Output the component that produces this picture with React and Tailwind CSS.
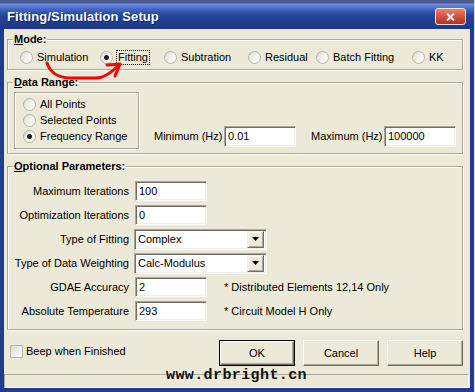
import React from 'react';

const Radio = ({ checked }) => (
  <span className="w-[13px] h-[13px] shrink-0 rounded-full border border-[#B5B5AA] bg-linear-to-br from-[#D6D6CE] via-[#F4F4F0] to-white flex items-center justify-center">
    {checked && <span className="w-[5px] h-[5px] rounded-full bg-[#1E1E1E]" />}
  </span>
);

const TextBox = ({ value, className }) => (
  <div
    className={
      'h-[20px] bg-white border border-t-[#ACA899] border-l-[#ACA899] border-r-white border-b-white shadow-[inset_1px_1px_0_#716F64,inset_-1px_-1px_0_#F1EFE2] pl-[3px] flex items-center ' +
      className
    }
  >
    {value}
  </div>
);

const Combo = ({ value }) => (
  <div className="ml-[5px] w-[133px] h-[21px] bg-white border border-t-[#ACA899] border-l-[#ACA899] border-r-white border-b-white shadow-[inset_1px_1px_0_#716F64,inset_-1px_-1px_0_#F1EFE2] flex items-center pl-[3px] pr-[2px]">
    <span className="flex-1">{value}</span>
    <span className="w-[17px] h-[17px] bg-[#ECE9D8] border border-t-[#F1EFE2] border-l-[#F1EFE2] border-r-[#716F64] border-b-[#716F64] shadow-[inset_1px_1px_0_#fff,inset_-1px_-1px_0_#ACA899] flex items-center justify-center">
      <svg width="7" height="4" viewBox="0 0 7 4">
        <path d="M0 0h7L3.5 4z" fill="#000" />
      </svg>
    </span>
  </div>
);

const Group = ({ title, underline, className, children }) => (
  <fieldset
    className={
      'w-[456px] border border-[#ACA899] shadow-[inset_1px_1px_0_#fff,1px_1px_0_#fff] ' + className
    }
  >
    <legend className="ml-[5px] px-[1px] font-bold leading-[13px]">
      <u>{underline}</u>
      {title}
    </legend>
    {children}
  </fieldset>
);

const Button = ({ label, isDefault }) => (
  <div
    className={
      isDefault
        ? 'w-[76px] h-[26px] border border-black flex'
        : 'w-[76px] h-[26px] flex'
    }
  >
    <div className="flex-1 bg-[#ECE9D8] border border-t-white border-l-white border-r-[#716F64] border-b-[#716F64] shadow-[inset_-1px_-1px_0_#ACA899] flex items-center justify-center">
      {label}
    </div>
  </div>
);

export default function App() {
  const modes = [
    { label: 'Simulation', w: 'w-[80px]' },
    { label: 'Fitting', w: 'w-[64px]', checked: true, focus: true },
    { label: 'Subtration', w: 'w-[84px]' },
    { label: 'Residual', w: 'w-[68px]' },
    { label: 'Batch Fitting', w: 'w-[96px]' },
    { label: 'KK', w: 'w-[40px]' },
  ];

  const params = [
    { label: 'Maximum Iterations', value: '100' },
    { label: 'Optimization Iterations', value: '0' },
    { label: 'Type of Fitting', value: 'Complex', combo: true },
    { label: 'Type of Data Weighting', value: 'Calc-Modulus', combo: true },
    { label: 'GDAE Accuracy', value: '2', note: '* Distributed Elements 12,14 Only' },
    { label: 'Absolute Temperature', value: '293', note: '* Circuit Model H Only' },
  ];

  return (
    <div className="relative w-[475px] h-[392px] overflow-hidden bg-[#1F3C8E] border-r border-r-[#D6D6D6] font-['Liberation_Sans',Arial,sans-serif] text-[11px] text-black">
      {/* title bar */}
      <div className="h-[29px] flex items-center pt-[4px] pl-[7px] bg-[linear-gradient(to_bottom,#4A5A8E_0px,#4A5A8E_3px,#6F90E2_4px,#4B6ECB_8px,#26459A_15px,#1C3886_29px)]">
        <span className="text-white font-bold text-[13px] tracking-[0.1px] [text-shadow:1px_1px_0_#0F2260]">
          Fitting/Simulation Setup
        </span>
        <div className="ml-auto mr-[8px] w-[31px] h-[17px] rounded-[3px] border border-[#E8E8F0] bg-linear-to-b from-[#E9826C] via-[#D4513A] to-[#B83020] flex items-center justify-center">
          <svg width="9" height="8" viewBox="0 0 9 8">
            <path d="M1 0.5L8 7.5M8 0.5L1 7.5" stroke="#fff" strokeWidth="2" />
          </svg>
        </div>
      </div>

      {/* dialog body */}
      <div className="relative ml-[4px] w-[466px] h-[359px] bg-[#ECE9D8] flex flex-col">
        <div className="px-[3px] flex flex-col">
          <Group underline="M" title="ode:" className="mt-[4px] pb-[4px]">
            <div className="flex items-center h-[16px] mt-[3px] pl-[12px]">
              {modes.map((m) => (
                <div key={m.label} className={'flex items-center gap-[4px] ' + m.w}>
                  <Radio checked={m.checked} />
                  <span
                    className={
                      m.focus
                        ? 'border border-dotted border-black px-[1px] leading-[13px] -ml-[1px]'
                        : 'leading-[13px]'
                    }
                  >
                    {m.label}
                  </span>
                </div>
              ))}
            </div>
          </Group>

          <Group underline="D" title="ata Range:" className="mt-[6px] pb-[4px]">
            <div className="flex items-end mt-[3px]">
              <div className="ml-[6px] w-[125px] h-[57px] border border-[#ACA899] shadow-[inset_1px_1px_0_#fff,1px_1px_0_#fff] flex flex-col pt-[3px] pl-[8px]">
                {[
                  ['All Points', false],
                  ['Selected Points', false],
                  ['Frequency Range', true],
                ].map(([label, checked]) => (
                  <div key={label} className="h-[16px] flex items-center gap-[4px]">
                    <Radio checked={checked} />
                    <span>{label}</span>
                  </div>
                ))}
              </div>
              <div className="flex items-center mb-[2px]">
                <span className="ml-[15px] w-[70px]">Minimum (Hz)</span>
                <TextBox value="0.01" className="w-[72px] h-[21px]" />
                <span className="ml-[15px] w-[73px]">Maximum (Hz)</span>
                <TextBox value="100000" className="w-[72px] h-[21px]" />
              </div>
            </div>
          </Group>

          <Group underline="O" title="ptional Parameters:" className="mt-[6px] pb-[8px]">
            <div className="flex flex-col gap-[4px] pt-[8px]">
              {params.map((p) => (
                <div key={p.label} className="flex items-center h-[20px]">
                  <span className="w-[121px] text-right">{p.label}</span>
                  {p.combo ? (
                    <Combo value={p.value} />
                  ) : (
                    <TextBox value={p.value} className="ml-[6px] w-[72px]" />
                  )}
                  {p.note && <span className="ml-[17px]">{p.note}</span>}
                </div>
              ))}
            </div>
          </Group>

          <div className="w-[456px] flex items-start mt-[10px]">
            <div className="flex items-center gap-[3px] ml-[3px] mt-[3px]">
              <span className="w-[13px] h-[13px] border border-[#B5B5AA] bg-linear-to-br from-[#DCDCD4] to-white" />
              <span>Beep when Finished</span>
            </div>
            <div className="ml-auto flex gap-[8px]">
              <Button label="OK" isDefault />
              <Button label="Cancel" />
              <Button label="Help" />
            </div>
          </div>
        </div>

        {/* status bar */}
        <div className="mt-[8px] w-[465px] h-[14px] border border-t-[#ACA899] border-l-[#ACA899] border-r-white border-b-white" />

        <span className="absolute left-[162px] top-[339px] font-['Liberation_Mono',monospace] font-bold text-[15px] leading-[15px] tracking-[0.4px] text-[#111]">
          www.drbright.cn
        </span>
      </div>

      {/* red hand-drawn arrow */}
      <svg className="absolute left-0 top-0 pointer-events-none" width="475" height="392">
        <path
          d="M47 63 C50 72 58 78 70 78 L96 78 C104 78 111 73 118 66"
          stroke="#FF0000"
          strokeWidth="3"
          fill="none"
          strokeLinecap="round"
        />
        <path
          d="M107 65 L120 64 L115 76"
          stroke="#FF0000"
          strokeWidth="3"
          fill="none"
          strokeLinecap="round"
          strokeLinejoin="round"
        />
      </svg>
    </div>
  );
}
